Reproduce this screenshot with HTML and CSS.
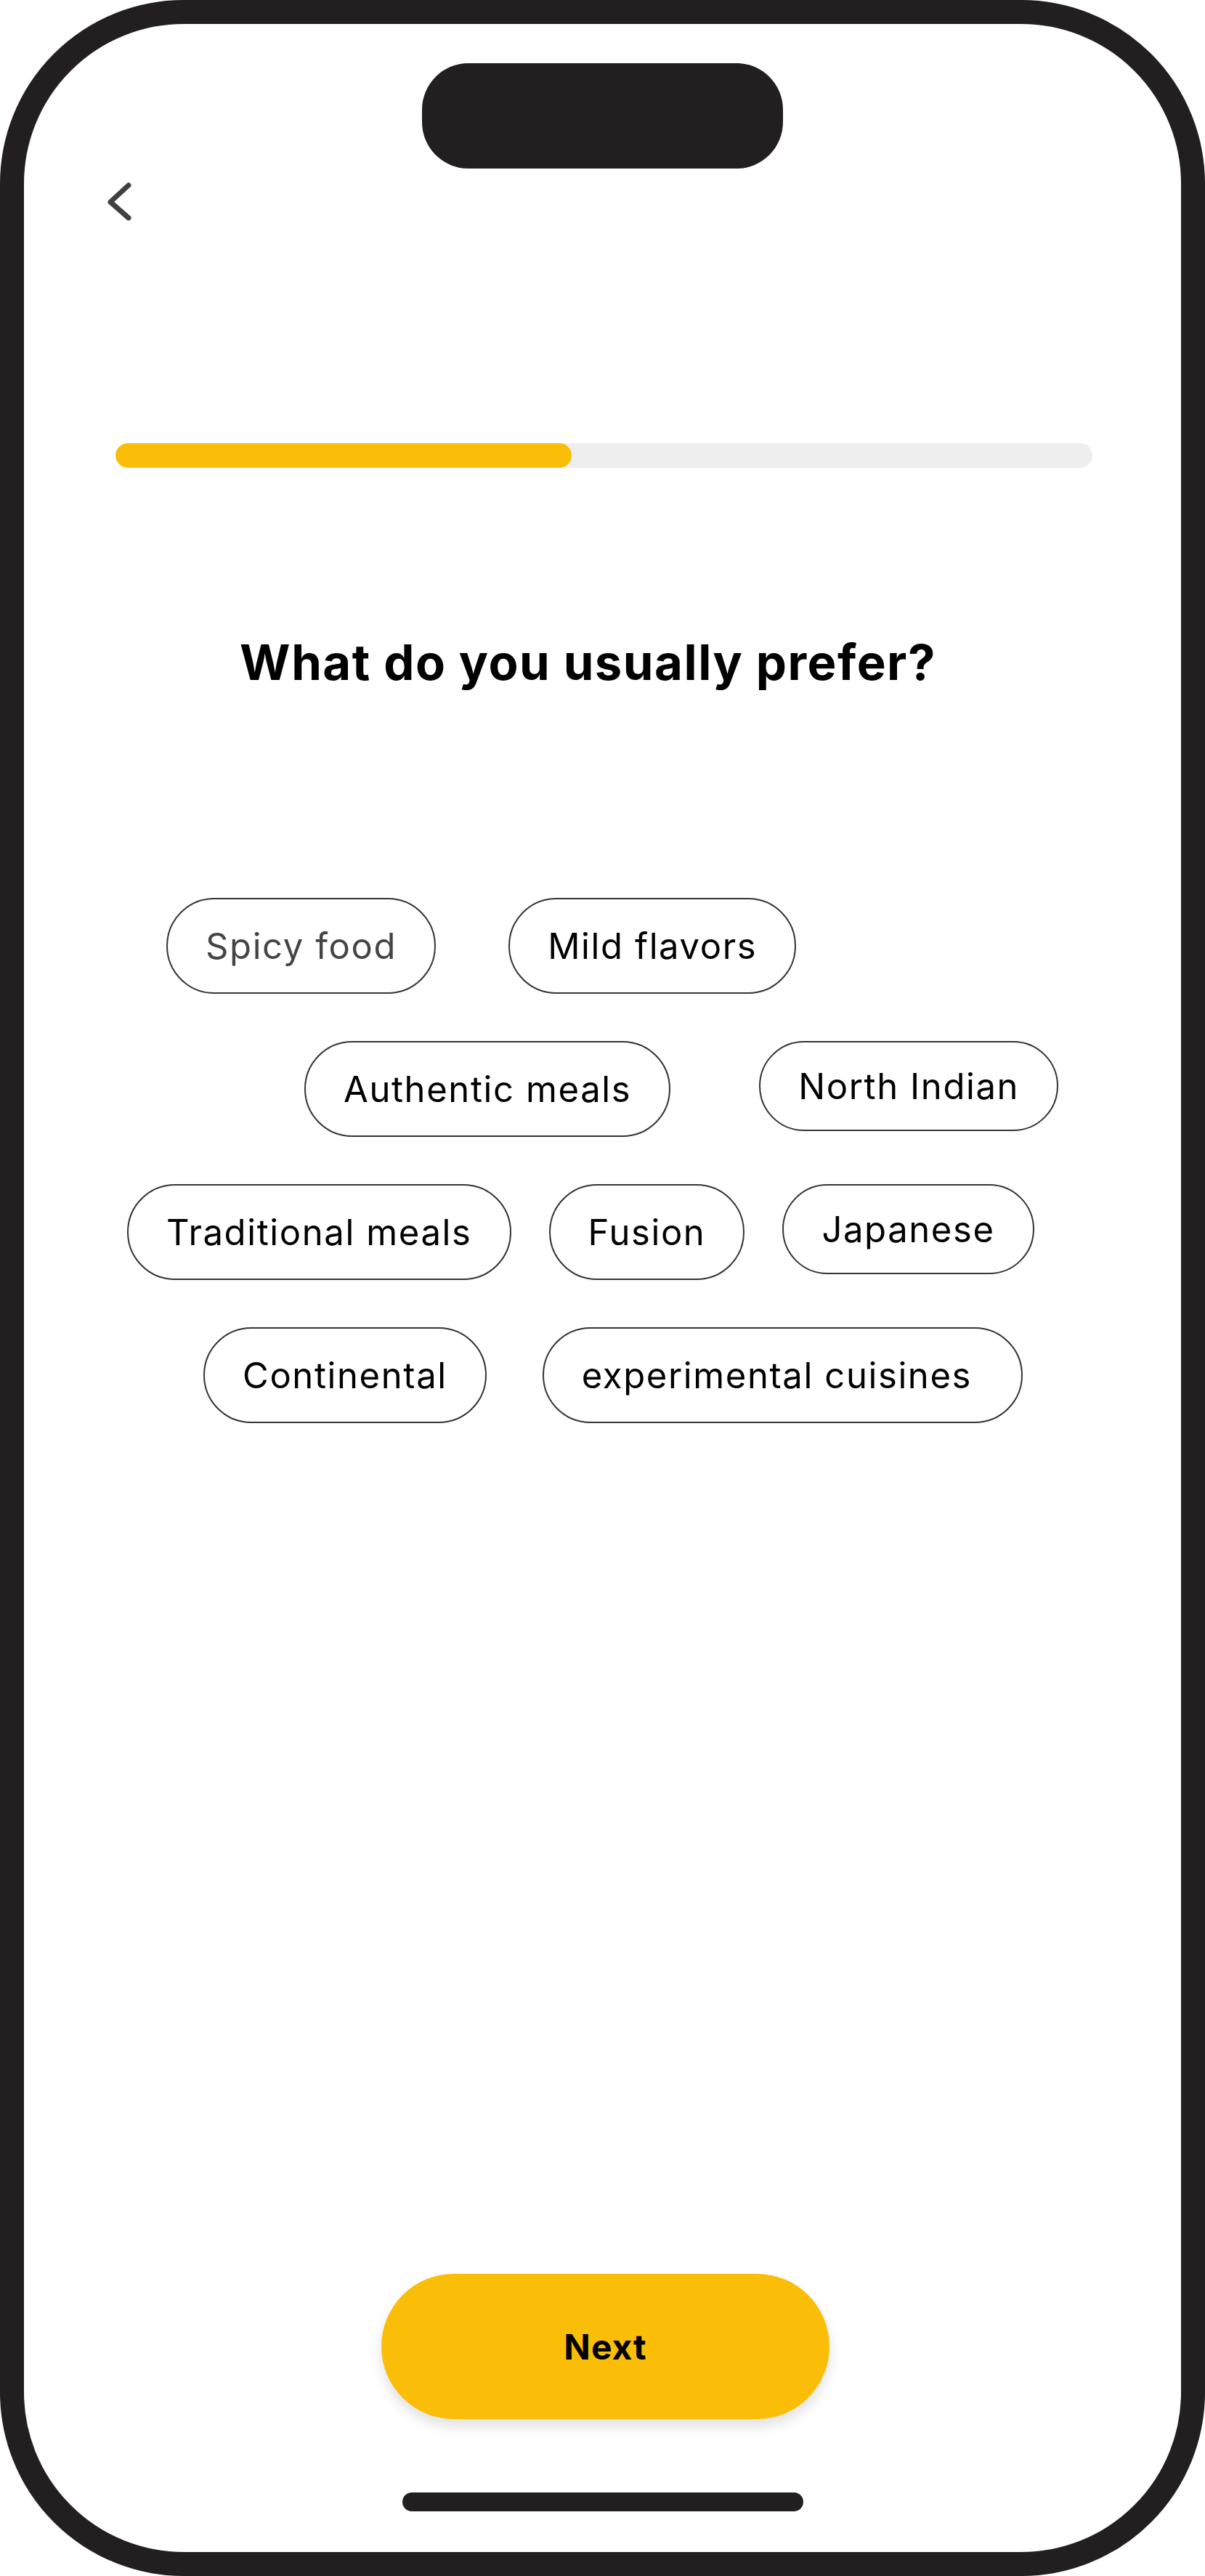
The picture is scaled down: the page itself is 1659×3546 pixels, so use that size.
FILE: index.html
```html
<!DOCTYPE html>
<html lang="en">
<head>
  <meta charset="UTF-8">
  <meta name="viewport" content="width=device-width, initial-scale=1.0">
  <title>Food preferences</title>
  <link rel="stylesheet" href="styles.css">
</head>
<body>
  <div class="phone">
    <div class="island"></div>

    <button class="back" aria-label="Back">
      <svg width="44" height="60" viewBox="0 0 44 60">
        <path d="M37 7 L12 30 L37 52" fill="none" stroke="#404040" stroke-width="7" stroke-linecap="round" stroke-linejoin="round"/>
      </svg>
    </button>

    <div class="progress">
      <div class="progress-fill" style="width: 46.7%"></div>
    </div>

    <h1 class="question">What do you usually prefer?</h1>

    <div class="options">
      <div class="option-row row-1">
        <button class="chip chip-muted">Spicy food</button>
        <button class="chip">Mild flavors</button>
      </div>
      <div class="option-row row-2">
        <button class="chip">Authentic meals</button>
        <button class="chip chip-sm">North Indian</button>
      </div>
      <div class="option-row row-3">
        <button class="chip">Traditional meals</button>
        <button class="chip">Fusion</button>
        <button class="chip chip-sm">Japanese</button>
      </div>
      <div class="option-row row-4">
        <button class="chip">Continental</button>
        <button class="chip chip-wide">experimental cuisines</button>
      </div>
    </div>

    <button class="next">Next</button>
    <div class="home-indicator"></div>
  </div>
</body>
</html>
```

FILE: styles.css
```css
body {
  margin: 0;
  background: #fff;
  font-family: Inter, "Noto Sans", sans-serif;
  color: #000;
}

.phone {
  box-sizing: border-box;
  width: 1659px;
  height: 3546px;
  border: 33px solid #231f20;
  border-radius: 253px;
  background: #fff;
  display: flex;
  flex-direction: column;
}

.island {
  width: 497px;
  height: 145px;
  margin: 54px auto 0;
  background: #231f20;
  border-radius: 64px;
}

.back {
  align-self: flex-start;
  margin: 16px 0 0 107px;
  padding: 0;
  border: none;
  background: none;
  cursor: pointer;
  line-height: 0;
}

.progress {
  width: 1345px;
  height: 34px;
  margin: 302px 0 0 126px;
  background: #eeeeee;
  border-radius: 17px;
  overflow: hidden;
}

.progress-fill {
  height: 100%;
  background: #fabe08;
  border-radius: 17px;
}

.question {
  margin: 227px 40px 0 0;
  font-size: 67px;
  line-height: 81px;
  font-weight: 700;
  letter-spacing: 1.5px;
  text-align: center;
}

.options {
  display: flex;
  flex-direction: column;
  gap: 65px;
  margin-top: 284px;
}

.option-row {
  display: flex;
  align-items: flex-start;
}

.row-1 { padding-left: 196px; gap: 100px; }
.row-2 { padding-left: 386px; gap: 122px; }
.row-3 { padding-left: 142px; gap: 52px; }
.row-4 { padding-left: 247px; gap: 77px; }

.chip {
  box-sizing: border-box;
  height: 132px;
  padding: 0 52px;
  border: 2px solid #333;
  border-radius: 66px;
  background: #fff;
  font-family: inherit;
  font-size: 49px;
  letter-spacing: 1.6px;
  color: #000;
  white-space: nowrap;
  cursor: pointer;
}

.chip-sm {
  height: 124px;
}

.chip-wide {
  padding-right: 68px;
}

.chip-muted {
  color: #444;
}

.next {
  align-self: center;
  width: 617px;
  height: 200px;
  margin: auto 0 101px 8px;
  border: none;
  border-radius: 100px;
  background: #fabe08;
  box-shadow: 0 10px 18px rgba(0, 0, 0, 0.12);
  font-family: inherit;
  font-size: 48px;
  font-weight: 700;
  letter-spacing: 1px;
  color: #000;
  cursor: pointer;
}

.home-indicator {
  align-self: center;
  width: 552px;
  height: 26px;
  margin-bottom: 56px;
  background: #231f20;
  border-radius: 13px;
}
```
